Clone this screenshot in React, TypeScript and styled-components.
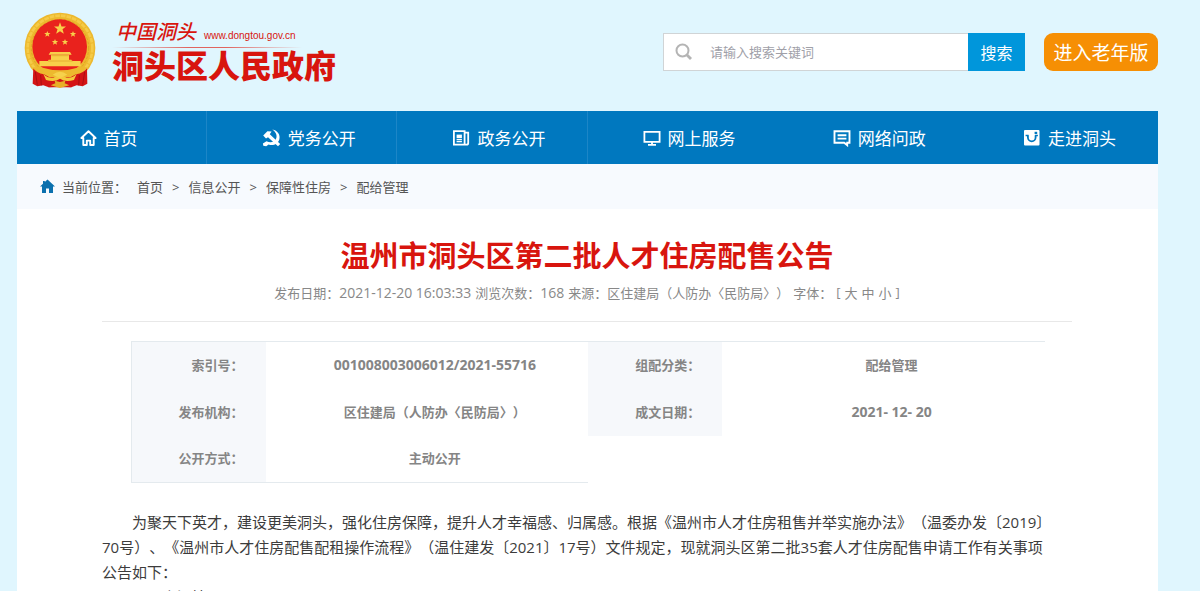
import React from "react";
import styled, { createGlobalStyle } from "styled-components";

const GlobalStyle = createGlobalStyle`
  * { box-sizing: border-box; }
  body {
    margin: 0;
    background: #e0f6fe;
    color: #333;
    font-family: "Open Sans", "Noto Sans CJK SC", sans-serif;
    font-size: 13px;
    text-spacing-trim: space-all;
  }
  a { color: inherit; text-decoration: none; }
`;

const Page = styled.div`
  padding: 0 42px 0 17px;
`;

const Header = styled.header`
  display: flex;
  align-items: flex-start;
  height: 111px;
`;

const Brand = styled.a`
  display: flex;
  gap: 16px;
  padding: 12px 0 0 7px;
  color: #d8150e;
`;

const BrandText = styled.div`
  padding-top: 8px;
`;

const BrandTop = styled.div`
  display: flex;
  align-items: flex-end;
  gap: 8px;
  height: 27px;
  padding: 0 0 3px 4px;
`;

const Script = styled.span`
  font-size: 20px;
  line-height: 24px;
  font-weight: 500;
  font-style: italic;
`;

const Domain = styled.span`
  font-family: "Liberation Sans", sans-serif;
  font-size: 10px;
  line-height: 16px;
`;

const BrandRule = styled.div`
  width: 190px;
  height: 1px;
  background: linear-gradient(90deg, #e0f6fe, #e0645f 40%, #e0645f 60%, #e0f6fe);
`;

const BrandName = styled.div`
  font-size: 32px;
  line-height: 36px;
  font-weight: 900;
`;

const Tools = styled.div`
  display: flex;
  gap: 19px;
  margin: 33px 0 0 auto;
`;

const SearchForm = styled.form`
  display: flex;
  height: 38px;
`;

const SearchField = styled.label`
  display: flex;
  align-items: center;
  gap: 17px;
  width: 305px;
  padding-left: 11px;
  background: #fff;
  border: 1px solid #d0d4d6;
  border-right: 0;
`;

const SearchInput = styled.input`
  flex: 1;
  min-width: 0;
  padding: 0;
  border: 0;
  outline: 0;
  background: none;
  font: inherit;
  &::placeholder { color: #a0a0a8; opacity: 1; }
`;

const SearchButton = styled.button`
  width: 57px;
  padding: 0;
  border: 0;
  background: #0096db;
  color: #fff;
  font: inherit;
  font-size: 16px;
`;

const ElderButton = styled.button`
  width: 114px;
  height: 38px;
  padding: 0;
  border: 0;
  border-radius: 9px;
  background: #f68f04;
  color: #fff;
  font: inherit;
  font-size: 19px;
`;

const Nav = styled.nav`
  display: grid;
  grid-template-columns: repeat(6, 1fr);
  height: 53px;
  background: #0078bf;
`;

const NavItem = styled.a<{ $divided: boolean }>`
  display: flex;
  align-items: center;
  justify-content: center;
  gap: 7px;
  padding: 0 0 0 14px;
  border-right: 1px solid ${(p) => (p.$divided ? "#1c86c7" : "transparent")};
  color: #fff;
  font-size: 17px;
  &:first-child { padding: 0 6px 0 0; }
`;

const Crumbs = styled.nav`
  display: flex;
  align-items: center;
  height: 45px;
  padding-left: 23px;
  background: #f7fafe;
  color: #555;
`;

const CrumbLabel = styled.span`
  margin: 0 10px 0 7px;
`;

const CrumbSep = styled.span`
  margin: 0 9px;
`;

const Article = styled.main`
  min-height: 382px;
  padding: 26px 86px 0 85px;
  background: #fff;
`;

const Title = styled.h1`
  margin: 0;
  color: #d8150e;
  font-size: 29px;
  line-height: 42px;
  font-weight: 700;
  text-align: center;
`;

const Meta = styled.div`
  display: flex;
  justify-content: center;
  align-items: center;
  gap: 4px;
  height: 44px;
  padding-bottom: 14px;
  color: #888;
`;

const Digits = styled.span`
  font-size: 14px;
`;

const SizeLink = styled.a``;

const Rule = styled.hr`
  height: 1px;
  margin: 0 0 19px;
  border: 0;
  background: #e8e8e8;
`;

const InfoTable = styled.table`
  width: calc(100% - 56px);
  margin: 0 28px 0 29px;
  table-layout: fixed;
  border-collapse: collapse;
  border-top: 1px solid #e4eaee;
  color: #858585;
  font-weight: 700;
`;

const LabelCol = styled.col`
  width: 134px;
`;

const InfoLabel = styled.th<{ $edge?: boolean; $last?: boolean }>`
  height: 47px;
  padding: 0 22px 2px 0;
  background: #f6f8fb;
  border-left: ${(p) => (p.$edge ? "1px solid #e4eaee" : "0")};
  border-bottom: ${(p) => (p.$last ? "1px solid #e4eaee" : "0")};
  text-align: right;
`;

const InfoValue = styled.td<{ $last?: boolean }>`
  padding: 0 0 2px 16px;
  border-bottom: ${(p) => (p.$last ? "1px solid #e4eaee" : "0")};
  text-align: center;
`;

const Copy = styled.div`
  padding-top: 27px;
  color: #3c3c3c;
  font-size: 15px;
  line-height: 25px;
`;

const Paragraph = styled.p`
  margin: 0;
  text-indent: 2em;
`;

const Emblem = () => (
  <svg width="72" height="77" viewBox="26 20 216 231" aria-hidden="true">
    <circle cx="134" cy="128" r="106" fill="#edb92e" />
    <circle cx="134" cy="128" r="97" fill="none" stroke="#f5cb48" strokeWidth="8" strokeDasharray="14 3" />
    <circle cx="134" cy="128" r="86" fill="none" stroke="#dda524" strokeWidth="3" strokeDasharray="8 5" />
    <circle cx="133" cy="124" r="82" fill="#e9221d" />
    <path d="M76 186 Q134 204 193 186 L216 186 L180 222 L88 222 L52 186Z" fill="#edb92e" />
    <path d="M54 189 Q62 203 86 207 L100 214 L112 240 L128 244 L100 246 L84 240 L66 243 L52 235Z" fill="#d41416" />
    <path d="M215 189 Q206 203 182 207 L168 214 L156 240 L140 244 L168 246 L184 240 L202 243 L216 235Z" fill="#d41416" />
    <path d="M88 216 L180 216 L168 246 L100 246Z" fill="#d41416" />
    <path d="M60 200 L66 238 M76 209 L78 240 M208 200 L202 238 M192 209 L190 240" stroke="#ac0e12" strokeWidth="3" />
    <path d="M84 206 Q104 224 120 214 Q134 204 148 214 Q164 224 184 206 L176 224 Q150 232 134 220 Q118 232 92 224Z" fill="#f4c93c" />
    <path d="M106 240 L120 234 L118 226 L134 230 L150 226 L148 234 L162 240 L134 248Z" fill="#e8ae28" />
    <path d="M112 208 Q134 190 156 208 L134 218Z" fill="#f6d14c" />
    <g fill="#f8d04a">
      <path d="M134 51l4.500 12.500h13.500l-10.500 8.500 4 13-11.500-7.500-11.500 7.500 4-13-10.500-8.500h13.500z" />
      <path d="M96 77l2.500 6h7l-5.500 4.500 2 7-6-4-6 4 2-7-5.500-4.500h7z" />
      <path d="M173 77l2.500 6h7l-5.500 4.500 2 7-6-4-6 4 2-7-5.500-4.500h7z" />
      <path d="M119 101l2.500 6h7l-5.500 4.500 2 7-6-4-6 4 2-7-5.500-4.500h7z" />
      <path d="M149 101l2.500 6h7l-5.500 4.500 2 7-6-4-6 4 2-7-5.500-4.500h7z" />
      <path d="M105 140h59l5 8h-69zM107 149h54v14h-54zM100 163h68l2 4h26v16H72v-16h26z" />
    </g>
    <path d="M108 151h52M98 167h74" stroke="#dda024" strokeWidth="2" />
  </svg>
);

const SearchIcon = () => (
  <svg width="18" height="18" viewBox="0 0 18 18" fill="none" stroke="#b4b4b4" strokeWidth="2" aria-hidden="true">
    <circle cx="7.500" cy="7.500" r="6" />
    <path d="M12 12L16 16" strokeWidth="2.800" />
  </svg>
);

const HomeOutline = () => (
  <svg width="17" height="18" viewBox="0 0 17 18" fill="none" stroke="#fff" strokeWidth="1.900" aria-hidden="true">
    <path d="M3.300 9H1.400L8.500 2.300 15.600 9h-1.900v7h-3.500v-4.400H6.800V16H3.300z" strokeLinejoin="round" />
  </svg>
);

const PartyIcon = () => (
  <svg width="19" height="18" viewBox="0 0 19 18" fill="#fff" aria-hidden="true">
    <path d="M10.300.6C15.800 1.600 18.600 6 17.300 10.600 16 15 11 17.300 6.600 15.500L4.200 17.200 1.300 16.800.9 14.400 4.500 12.200C8 14 11.800 13.400 13.700 10.600 15.700 7.400 14.300 3.400 10.300.6z" />
    <path d="M1.200 6.600L5.400 2.200 9.600 2.500 7.800 5.200 18.200 15 16 17.300 6 8.200 4 9.600z" />
  </svg>
);

const NewsIcon = () => (
  <svg width="18" height="18" viewBox="0 0 18 18" fill="none" stroke="#fff" strokeWidth="1.800" aria-hidden="true">
    <path d="M1.900 2.200h10.700v13.400H1.900zM12.600 3.700h3.600v10.200q0 1.700-1.700 1.700h-3" />
    <path d="M4.600 5.600h5.300v3.600H4.600z" fill="#fff" stroke="none" />
    <path d="M4.600 10.600h5.300M4.600 12.600h5.300" strokeWidth="1.400" />
  </svg>
);

const MonitorIcon = () => (
  <svg width="18" height="18" viewBox="0 0 18 18" fill="none" stroke="#fff" strokeWidth="1.800" aria-hidden="true">
    <path d="M1.400 2.800h15.200v10H1.400zM9 12.800v3M5 15.900h8" />
  </svg>
);

const MessageIcon = () => (
  <svg width="18" height="18" viewBox="0 0 18 18" fill="none" stroke="#fff" strokeWidth="1.900" aria-hidden="true">
    <path d="M1.500 2.200h15v11.600h-2.300v2.400l-3-2.400H1.500zM4.600 6.200h8.800M4.600 9.600h8.800" />
  </svg>
);

const CameraIcon = () => (
  <svg width="18" height="18" viewBox="0 0 18 18" aria-hidden="true">
    <rect x="1" y="1" width="15.500" height="15.500" rx="1" fill="#fff" />
    <path d="M2.600 6.500h3M11.900 6.500h3" stroke="#0078bf" strokeWidth="1.400" />
    <path d="M4.900 6.500v2a3.850 3.850 0 0 0 7.700 0v-2" fill="none" stroke="#0078bf" strokeWidth="1.800" />
    <rect x="11.600" y="2.800" width="2.600" height="2.200" fill="#0078bf" />
  </svg>
);

const HomeSolid = () => (
  <svg width="15" height="15" viewBox="0 0 15 15" fill="#0a70ae" aria-hidden="true">
    <path d="M7.500.5L15 7.500h-2V14H9V9.500H6V14H2V7.500H0L3 4.700V2h1.800v1z" />
  </svg>
);

const navItems = [
  { label: "首页", Icon: HomeOutline },
  { label: "党务公开", Icon: PartyIcon },
  { label: "政务公开", Icon: NewsIcon },
  { label: "网上服务", Icon: MonitorIcon },
  { label: "网络问政", Icon: MessageIcon },
  { label: "走进洞头", Icon: CameraIcon },
];

const crumbs = ["首页", "信息公开", "保障性住房", "配给管理"];

export default function App() {
  return (
    <>
      <GlobalStyle />
      <Page>
        <Header>
          <Brand href="#">
            <Emblem />
            <BrandText>
              <BrandTop>
                <Script>中国洞头</Script>
                <Domain>www.dongtou.gov.cn</Domain>
              </BrandTop>
              <BrandRule />
              <BrandName>洞头区人民政府</BrandName>
            </BrandText>
          </Brand>
          <Tools>
            <SearchForm onSubmit={(e) => e.preventDefault()}>
              <SearchField>
                <SearchIcon />
                <SearchInput type="text" placeholder="请输入搜索关键词" aria-label="搜索" />
              </SearchField>
              <SearchButton type="submit">搜索</SearchButton>
            </SearchForm>
            <ElderButton type="button">进入老年版</ElderButton>
          </Tools>
        </Header>
        <Nav>
          {navItems.map(({ label, Icon }, i) => (
            <NavItem key={label} href="#" $divided={i < 3}>
              <Icon />
              {label}
            </NavItem>
          ))}
        </Nav>
        <Crumbs>
          <HomeSolid />
          <CrumbLabel>当前位置：</CrumbLabel>
          {crumbs.map((name, i) => (
            <React.Fragment key={name}>
              {i > 0 && <CrumbSep>&gt;</CrumbSep>}
              <a href="#">{name}</a>
            </React.Fragment>
          ))}
        </Crumbs>
        <Article>
          <Title>温州市洞头区第二批人才住房配售公告</Title>
          <Meta>
            <span>发布日期：<Digits>2021-12-20 16:03:33</Digits></span>
            <span>浏览次数：<Digits>168</Digits></span>
            <span>来源：区住建局（人防办〈民防局〉）</span>
            <span>字体：</span>
            <span>[</span>
            <SizeLink href="#">大</SizeLink>
            <SizeLink href="#">中</SizeLink>
            <SizeLink href="#">小</SizeLink>
            <span>]</span>
          </Meta>
          <Rule />
          <InfoTable>
            <colgroup>
              <LabelCol />
              <col />
              <LabelCol />
              <col />
            </colgroup>
            <tbody>
              <tr>
                <InfoLabel scope="row" $edge>索引号：</InfoLabel>
                <InfoValue><Digits>001008003006012/2021-55716</Digits></InfoValue>
                <InfoLabel scope="row">组配分类：</InfoLabel>
                <InfoValue>配给管理</InfoValue>
              </tr>
              <tr>
                <InfoLabel scope="row" $edge>发布机构：</InfoLabel>
                <InfoValue>区住建局（人防办〈民防局〉）</InfoValue>
                <InfoLabel scope="row">成文日期：</InfoLabel>
                <InfoValue><Digits>2021- 12- 20</Digits></InfoValue>
              </tr>
              <tr>
                <InfoLabel scope="row" $edge $last>公开方式：</InfoLabel>
                <InfoValue $last>主动公开</InfoValue>
              </tr>
            </tbody>
          </InfoTable>
          <Copy>
            <Paragraph>
              为聚天下英才，建设更美洞头，强化住房保障，提升人才幸福感、归属感。根据《温州市人才住房租售并举实施办法》（温委办发〔2019〕
              <br />
              70号）、《温州市人才住房配售配租操作流程》（温住建发〔2021〕17号）文件规定，现就洞头区第二批35套人才住房配售申请工作有关事项
              <br />
              公告如下：
            </Paragraph>
            <Paragraph>一、房源情况</Paragraph>
          </Copy>
        </Article>
      </Page>
    </>
  );
}
